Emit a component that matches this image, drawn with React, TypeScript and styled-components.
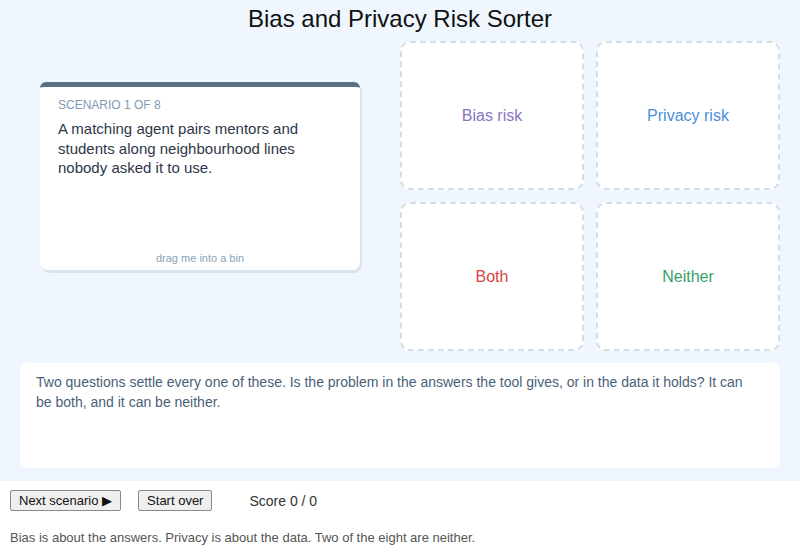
import styled, {createGlobalStyle} from 'styled-components';

const GlobalStyle = createGlobalStyle`
  body {
    margin: 0;
    background: #fff;
    font-family: "Liberation Sans", Arial, sans-serif;
  }
`;

const bins = [
    {label: 'Bias risk', color: '#8a74c4'},
    {label: 'Privacy risk', color: '#4a90d9'},
    {label: 'Both', color: '#d64545'},
    {label: 'Neither', color: '#38a169'},
];

const App = () => {
    return <>
        <GlobalStyle/>
        <Stage>
            <Title>Bias and Privacy Risk Sorter</Title>

            <Board>
                <CardSlot>
                    <Card>
                        <CardLabel>Scenario 1 of 8</CardLabel>
                        <CardText>
                            A matching agent pairs mentors and students along neighbourhood lines nobody asked it to use.
                        </CardText>
                        <CardHint>drag me into a bin</CardHint>
                    </Card>
                </CardSlot>

                <BinGrid>
                    {bins.map(bin =>
                        <Bin key={bin.label} $color={bin.color}>{bin.label}</Bin>
                    )}
                </BinGrid>
            </Board>

            <Feedback>
                Two questions settle every one of these. Is the problem in the answers the tool gives, or in the data it holds? It can be both, and it can be neither.
            </Feedback>
        </Stage>

        <Controls>
            <Button>Next scenario ▶</Button>
            <Button>Start over</Button>
            <Score>Score 0 / 0</Score>
        </Controls>

        <Note>Bias is about the answers. Privacy is about the data. Two of the eight are neither.</Note>
    </>;
};

export default App;


const Stage = styled.div`
  background: #eff6fd;
  padding: 5px 20px 13px;
`;

const Title = styled.h1`
  margin: 0 0 8px;
  font-size: 24px;
  line-height: 28px;
  font-weight: 400;
  text-align: center;
  color: #111;
`;

const Board = styled.div`
  display: grid;
  grid-template-columns: 360px 380px;
  gap: 20px;
`;

const CardSlot = styled.div`
  display: flex;
  justify-content: center;
  align-items: flex-start;
  padding-top: 41px;
`;

const Card = styled.div`
  width: 320px;
  height: 183px;
  box-sizing: content-box;
  display: flex;
  flex-direction: column;
  background: #fff;
  border-top: 5px solid #5a7184;
  border-radius: 6px 6px 8px 8px;
  box-shadow: 2px 3px 0 #dbe4ec;
`;

const CardLabel = styled.div`
  padding: 10px 18px 0;
  font-size: 12px;
  line-height: 16px;
  text-transform: uppercase;
  color: #7f9bb6;
`;

const CardText = styled.p`
  margin: 6px 0 0;
  padding: 0 18px;
  font-size: 15px;
  line-height: 19.5px;
  color: #2d3748;
`;

const CardHint = styled.div`
  margin-top: auto;
  padding-bottom: 6px;
  font-size: 11px;
  text-align: center;
  color: #8aa3ba;
`;

const BinGrid = styled.div`
  display: grid;
  grid-template-columns: 1fr 1fr;
  grid-template-rows: 149px 149px;
  gap: 12px;
`;

const Bin = styled.div<{$color: string}>`
  display: flex;
  align-items: center;
  justify-content: center;
  background: #fff;
  border: 2px dashed #d3dee8;
  border-radius: 10px;
  font-size: 16px;
  color: ${p => p.$color};
`;

const Feedback = styled.div`
  margin-top: 12px;
  min-height: 73px;
  padding: 9px 30px 23px 16px;
  background: #fff;
  border-radius: 8px;
  font-size: 14px;
  line-height: 20px;
  color: #4a5f78;
`;

const Controls = styled.div`
  display: flex;
  align-items: center;
  gap: 17px;
  padding: 9px 10px 0;
`;

const Button = styled.button`
  height: 21px;
  padding: 1px 8px;
  background: #efefef;
  border: 1px solid #8a8a8a;
  border-radius: 2px;
  font-family: "Liberation Sans", Arial, sans-serif;
  font-size: 13px;
  color: #111;
`;

const Score = styled.span`
  margin-left: 20px;
  font-size: 14px;
  color: #333;
`;

const Note = styled.p`
  margin: 19px 10px 0;
  font-size: 13px;
  color: #555;
`;
